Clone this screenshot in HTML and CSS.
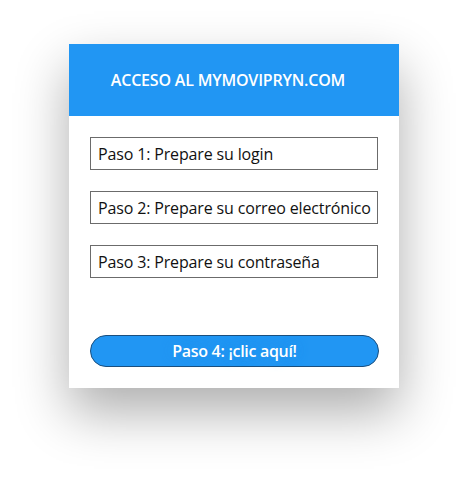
FILE: index.html
```html
<!DOCTYPE html>
<html lang="es">
<head>
    <meta charset="UTF-8">
    <meta name="viewport" content="width=device-width, initial-scale=1.0">
    <title>Acceso al mymovipryn.com</title>
    <link rel="stylesheet" href="styles.css">
</head>
<body>
    <div class="card">
        <div class="card-header">
            <h1 class="title">ACCESO AL MYMOVIPRYN.COM</h1>
        </div>

        <div class="card-body">
            <div class="step-list">
                <div class="step-box">Paso 1: Prepare su login</div>
                <div class="step-box">Paso 2: Prepare su correo electrónico</div>
                <div class="step-box">Paso 3: Prepare su contraseña</div>
            </div>

            <button class="go-button">Paso 4: ¡clic aquí!</button>
        </div>
    </div>
</body>
</html>
```

FILE: styles.css
```css
html, body {
    height: 100%;
}

body {
    font-family: "Open Sans", sans-serif;
    margin: 0;
    background-color: #ffffff;
    padding-top: 44px;
    box-sizing: border-box;
}

.card {
    width: 330px;
    margin: 0 auto;
    background: #ffffff;
    box-shadow: 0 24px 50px rgba(0, 0, 0, 0.32);
}

.card-header {
    background-color: #2196f3; /* blue bar */
    height: 72px;
    display: flex;
    align-items: center;
    justify-content: center;
}

.title {
    margin: 0;
    color: #ffffff;
    font-size: 16px;
    font-weight: 600;
    letter-spacing: -0.2px;
    padding-right: 12px;
}

.card-body {
    padding: 21px;
}

.step-list {
    display: flex;
    flex-direction: column;
    gap: 21px;
}

.step-box {
    height: 31px;
    border: 1px solid #6b6b6b;
    padding: 0 7px;
    display: flex;
    align-items: center;
    font-size: 16px;
    color: #111111;
    letter-spacing: -0.15px;
    white-space: nowrap;
}

.go-button {
    display: block;
    width: 289px;
    height: 32px;
    margin-top: 57px;
    background-color: #2196f3;
    color: white;
    border: 1px solid #1b4f7e;
    border-radius: 16px;
    font-family: inherit;
    font-size: 16px;
    font-weight: 600;
    letter-spacing: -0.3px;
    text-shadow: 0 0 12px rgba(33, 150, 243, 0.9);
    cursor: pointer;
}
```
